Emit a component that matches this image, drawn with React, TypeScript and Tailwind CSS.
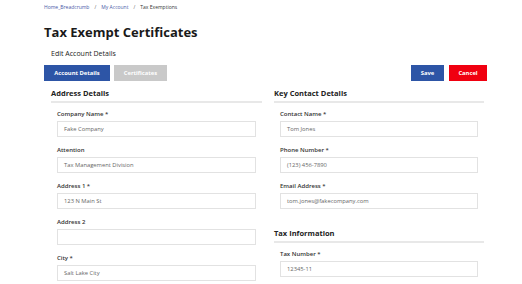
import type { ReactNode } from "react";

const font = { fontFamily: '"Open Sans", "Liberation Sans", sans-serif' };

function Field({ label, value }: { label: string; value?: string }) {
  return (
    <div className="flex flex-col">
      <div className="h-[9px] text-[6px] font-semibold leading-[9px] text-[#333]">{label}</div>
      <div className="mt-[2px] flex h-[16px] items-center border border-[#e2e2e2] bg-white px-[6px] text-[5.8px] text-[#666]">
        {value}
      </div>
    </div>
  );
}

function Section({ title, children }: { title: string; children: ReactNode }) {
  return (
    <div className="flex flex-col">
      <div className="text-[7.5px] font-bold leading-[10px] text-[#222]">{title}</div>
      <div className="mt-[3px] h-[2px] bg-[#e8e8e8]" />
      <div className="flex flex-col gap-[9px] px-[6px] pt-[7px]">{children}</div>
    </div>
  );
}

export default function App() {
  return (
    <div className="h-[284px] w-[522px] overflow-hidden bg-white" style={font}>
      <div className="ml-[44px] w-[443px] pt-[4px]">
        <div className="flex gap-[5px] text-[5px] leading-[7px]">
          <span className="text-[#4a5aa8]">Home_Breadcrumb</span>
          <span className="text-[#666]">/</span>
          <span className="text-[#4a5aa8]">My Account</span>
          <span className="text-[#666]">/</span>
          <span className="text-[#333]">Tax Exemptions</span>
        </div>
        <h1 className="mt-[13px] text-[13px] font-bold leading-[16px] text-[#1a1a1a]">Tax Exempt Certificates</h1>
        <div className="ml-[7px] mt-[9px] text-[7px] leading-[10px] text-[#222]">Edit Account Details</div>
        <div className="mt-[6px] flex items-center justify-between">
          <div className="flex gap-[4px]">
            <button className="h-[16px] w-[66px] bg-[#2d55a6] text-[5.8px] font-bold text-white">Account Details</button>
            <button className="h-[16px] w-[53px] bg-[#c9c9c9] text-[5.8px] font-bold text-white">Certificates</button>
          </div>
          <div className="flex gap-[5px]">
            <button className="h-[16px] w-[33px] bg-[#2d55a6] text-[5.8px] font-bold text-white">Save</button>
            <button className="h-[16px] w-[38px] bg-[#f00010] text-[5.8px] font-bold text-white">Cancel</button>
          </div>
        </div>
        <div className="mt-[7px] flex gap-[12px] pl-[7px]">
          <div className="w-[211px]">
            <Section title="Address Details">
              <Field label="Company Name *" value="Fake Company" />
              <Field label="Attention" value="Tax Management Division" />
              <Field label="Address 1 *" value="123 N Main St" />
              <Field label="Address 2" />
              <Field label="City *" value="Salt Lake City" />
            </Section>
          </div>
          <div className="w-[210px]">
            <Section title="Key Contact Details">
              <Field label="Contact Name *" value="Tom Jones" />
              <Field label="Phone Number *" value="(123) 456-7890" />
              <Field label="Email Address *" value="tom.jones@fakecompany.com" />
            </Section>
            <div className="mt-[19px]">
              <Section title="Tax Information">
                <Field label="Tax Number *" value="12345-11" />
              </Section>
            </div>
          </div>
        </div>
      </div>
    </div>
  );
}
